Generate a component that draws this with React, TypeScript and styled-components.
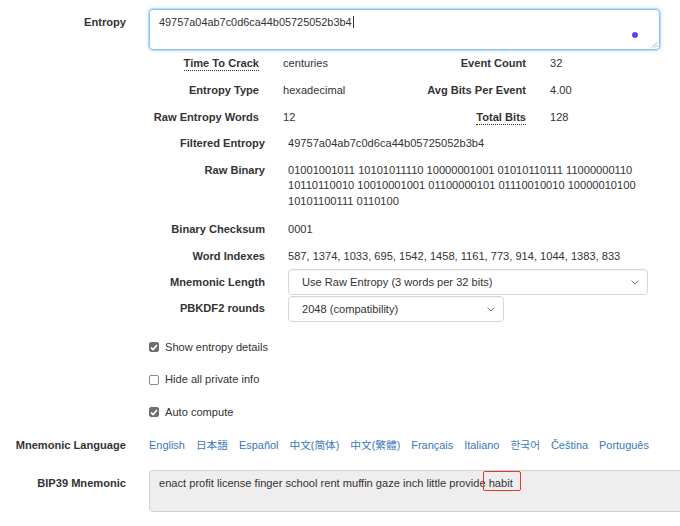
import styled, { createGlobalStyle } from 'styled-components';

const GlobalStyle = createGlobalStyle`
  html, body {
    margin: 0;
    padding: 0;
    background: #fff;
    overflow: hidden;
  }
  body {
    font-family: "Liberation Sans", Arial, "Noto Sans CJK JP", sans-serif;
    font-size: 11.1px;
    line-height: 15px;
    color: #333;
  }
`;

const Page = styled.div`
  width: 680px;
  padding-top: 9px;
  overflow: hidden;
`;

const FormRow = styled.div<{ $pad?: string }>`
  display: grid;
  grid-template-columns: 126px 1fr;
  column-gap: 23px;
  align-items: start;
  padding: ${(p) => p.$pad || '0'};
`;

const Label = styled.div<{ $top?: number }>`
  font-weight: bold;
  text-align: right;
  white-space: nowrap;
  padding-top: ${(p) => p.$top ?? 0}px;
`;

const EntropyBox = styled.div`
  position: relative;
  box-sizing: border-box;
  width: 511px;
  height: 41px;
  padding: 5px 9px;
  border: 1px solid #8fc1ec;
  border-radius: 4px;
  box-shadow: 0 0 0 1px rgba(102, 175, 233, 0.35), 0 0 5px rgba(102, 175, 233, 0.4);
  font-size: 10.9px;
`;

const Caret = styled.span`
  display: inline-block;
  width: 1px;
  height: 12px;
  background: #333;
  vertical-align: -2px;
  margin-left: 1px;
`;

const Dot = styled.span`
  position: absolute;
  right: 21px;
  top: 22px;
  width: 6px;
  height: 6px;
  border-radius: 50%;
  background: #6a3df0;
`;

const Grip = styled.svg`
  position: absolute;
  right: 1px;
  bottom: 1px;
`;

const StatsGrid = styled.div`
  display: grid;
  grid-template-columns: 110px 110px 109px 1fr;
  column-gap: 24px;
  margin-left: 149px;
  margin-top: -0.5px;
`;

const StatCell = styled.div<{ $label?: boolean }>`
  padding: 6px 0;
  white-space: nowrap;
  text-align: ${(p) => (p.$label ? 'right' : 'left')};
  font-weight: ${(p) => (p.$label ? 'bold' : 'normal')};
`;

const Abbr = styled.span`
  border-bottom: 1px dotted #333;
  padding-bottom: 1px;
`;

const DetailGrid = styled.div`
  display: grid;
  grid-template-columns: 116px 1fr;
  column-gap: 23px;
  margin-left: 149px;
  align-items: start;
`;

const DetailLabel = styled.div<{ $pad?: string }>`
  font-weight: bold;
  text-align: right;
  white-space: nowrap;
  padding: ${(p) => p.$pad || '5.5px 0'};
`;

const DetailValue = styled.div<{ $pad?: string; $lh?: number }>`
  padding: ${(p) => p.$pad || '5.5px 0'};
  white-space: nowrap;
  line-height: ${(p) => p.$lh ?? 15}px;
`;

const Select = styled.div<{ $w: number }>`
  box-sizing: border-box;
  width: ${(p) => p.$w}px;
  height: 26px;
  display: flex;
  align-items: center;
  justify-content: space-between;
  padding: 0 8px 0 13px;
  border: 1px solid #d6d6d6;
  border-radius: 4px;
  background: #fff;
  box-shadow: inset 0 1px 1px rgba(0, 0, 0, 0.04);
`;

const CheckList = styled.div`
  margin-left: 149px;
  padding-top: 9px;
`;

const CheckRow = styled.div`
  height: 32.5px;
  display: flex;
  align-items: center;
  gap: 6px;
`;

const Box = styled.span<{ $on?: boolean }>`
  box-sizing: border-box;
  width: 10px;
  height: 10px;
  border-radius: 2px;
  display: inline-flex;
  align-items: center;
  justify-content: center;
  background: ${(p) => (p.$on ? '#6f6f6f' : '#fff')};
  border: 1px solid ${(p) => (p.$on ? '#6f6f6f' : '#8a8a8a')};
`;

const LangList = styled.div`
  display: flex;
  gap: 11px;
  white-space: nowrap;
  font-size: 10.95px;
`;

const LangLink = styled.a<{ $cjk?: boolean }>`
  color: #3a78b8;
  text-decoration: none;
  font-size: ${(p) => (p.$cjk ? '10.7px' : 'inherit')};
`;

const MnemonicBox = styled.div`
  box-sizing: border-box;
  width: 560px;
  height: 42px;
  padding: 5px 9px;
  background: #eee;
  border: 1px solid #d2d2d2;
  border-radius: 4px;
  white-space: nowrap;
`;

const Marked = styled.span`
  position: relative;
  &::after {
    content: '';
    position: absolute;
    left: -6px;
    right: -8px;
    top: -6px;
    bottom: -2px;
    border: 1.5px solid #e0392b;
    border-radius: 2px;
  }
`;

const Chevron = () => (
  <svg width="8" height="5" viewBox="0 0 8 5">
    <path d="M0.5 0.5 L4 4 L7.5 0.5" fill="none" stroke="#777" strokeWidth="1" />
  </svg>
);

const Check = () => (
  <svg width="8" height="7" viewBox="0 0 8 7">
    <path d="M1 3.6 L3.1 5.6 L7 1" fill="none" stroke="#fff" strokeWidth="1.6" />
  </svg>
);

const stats = [
  ['Time To Crack', 'centuries', 'Event Count', '32'],
  ['Entropy Type', 'hexadecimal', 'Avg Bits Per Event', '4.00'],
  ['Raw Entropy Words', '12', 'Total Bits', '128'],
];

const dotted = ['Time To Crack', 'Total Bits'];

const languages = [
  'English', '日本語', 'Español', '中文(简体)', '中文(繁體)',
  'Français', 'Italiano', '한국어', 'Čeština', 'Português',
];

const isCjk = (s: string) => /[\u3040-\u9fff\uac00-\ud7af]/.test(s);

export default function App() {
  return (
    <Page>
      <GlobalStyle />
      <FormRow>
        <Label $top={6}>Entropy</Label>
        <EntropyBox>
          49757a04ab7c0d6ca44b05725052b3b4<Caret />
          <Dot />
          <Grip width="7" height="7" viewBox="0 0 7 7">
            <path d="M6.5 1 L1 6.5 M6.5 4 L4 6.5" stroke="#999" strokeWidth="0.8" />
          </Grip>
        </EntropyBox>
      </FormRow>

      <StatsGrid>
        {stats.flatMap(([l1, v1, l2, v2]) => [
          <StatCell $label key={l1}>
            {dotted.includes(l1) ? <Abbr>{l1}</Abbr> : l1}
          </StatCell>,
          <StatCell key={l1 + v1}>{v1}</StatCell>,
          <StatCell $label key={l2}>
            {dotted.includes(l2) ? <Abbr>{l2}</Abbr> : l2}
          </StatCell>,
          <StatCell key={l2 + v2}>{v2}</StatCell>,
        ])}
      </StatsGrid>

      <DetailGrid>
        <DetailLabel>Filtered Entropy</DetailLabel>
        <DetailValue>49757a04ab7c0d6ca44b05725052b3b4</DetailValue>

        <DetailLabel $pad="6px 0">Raw Binary</DetailLabel>
        <DetailValue $pad="6px 0" $lh={15.5}>
          01001001011 10101011110 10000001001 01010110111 11000000110
          <br />
          10110110010 10010001001 01100000101 01110010010 10000010100
          <br />
          10101100111 0110100
        </DetailValue>

        <DetailLabel $pad="6.5px 0">Binary Checksum</DetailLabel>
        <DetailValue $pad="6.5px 0">0001</DetailValue>

        <DetailLabel>Word Indexes</DetailLabel>
        <DetailValue>587, 1374, 1033, 695, 1542, 1458, 1161, 773, 914, 1044, 1383, 833</DetailValue>

        <DetailLabel $pad="6px 0 0">Mnemonic Length</DetailLabel>
        <DetailValue $pad="0 0 1px">
          <Select $w={360}>
            Use Raw Entropy (3 words per 32 bits)
            <Chevron />
          </Select>
        </DetailValue>

        <DetailLabel $pad="5px 0 0">PBKDF2 rounds</DetailLabel>
        <DetailValue $pad="0">
          <Select $w={216}>
            2048 (compatibility)
            <Chevron />
          </Select>
        </DetailValue>
      </DetailGrid>

      <CheckList>
        <CheckRow>
          <Box $on>
            <Check />
          </Box>
          Show entropy details
        </CheckRow>
        <CheckRow>
          <Box />
          Hide all private info
        </CheckRow>
        <CheckRow>
          <Box $on>
            <Check />
          </Box>
          Auto compute
        </CheckRow>
      </CheckList>

      <FormRow $pad="9px 0 0">
        <Label>Mnemonic Language</Label>
        <LangList>
          {languages.map((l) => (
            <LangLink key={l} href="#" $cjk={isCjk(l)}>
              {l}
            </LangLink>
          ))}
        </LangList>
      </FormRow>

      <FormRow $pad="17px 0 0">
        <Label $top={6}>BIP39 Mnemonic</Label>
        <MnemonicBox>
          enact profit license finger school rent muffin gaze inch little provide <Marked>habit</Marked>
        </MnemonicBox>
      </FormRow>
    </Page>
  );
}
